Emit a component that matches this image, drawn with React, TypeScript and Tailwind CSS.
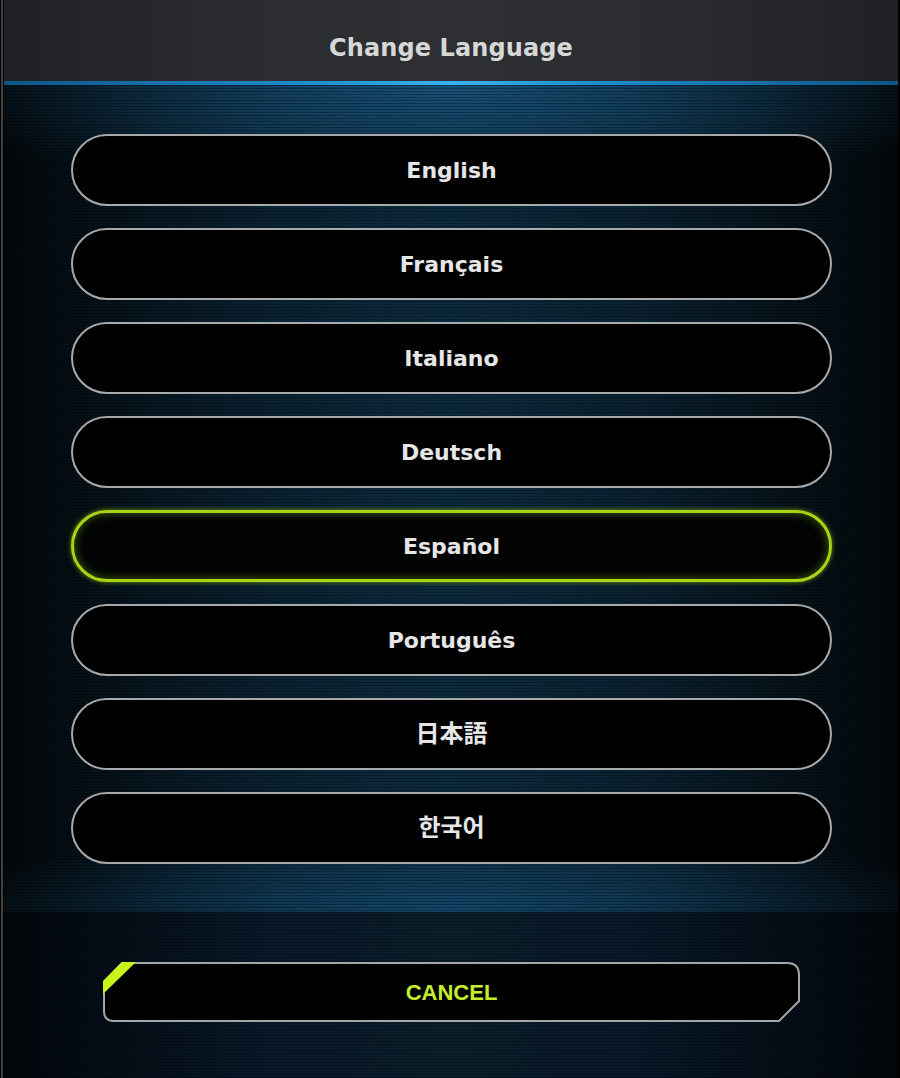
import React from "react";

const langs = ["English", "Français", "Italiano", "Deutsch", "Español", "Português", "日本語", "한국어"];

export default function App() {
  return (
    <div className="flex h-[1078px] w-[900px] bg-black">
      <div className="h-full w-[4px] border-l border-black bg-[#3e4042] border-r"></div>
      <div className="flex h-full flex-1 flex-col">
        <header className="flex h-[81px] shrink-0 items-center justify-center [background-image:linear-gradient(90deg,#1f2124,#2b2d30_30%,#2d2f32_50%,#2b2d30_70%,#1f2124)]">
          <h1
            className="mt-[14px] text-[24px] font-bold tracking-[0.1px] text-[#d6d8d8]"
            style={{ fontFamily: '"DejaVu Sans", "Liberation Sans", sans-serif' }}
          >
            Change Language
          </h1>
        </header>
        <div className="h-[4px] shrink-0 [background-image:linear-gradient(90deg,#0c5689,#1f8fd0_35%,#39b4f0_50%,#1f8fd0_65%,#0c5689)]"></div>
        <main className="flex h-[827px] shrink-0 flex-col gap-[22px] pl-[67px] pr-[66px] pt-[49px] [background-image:repeating-linear-gradient(180deg,rgba(0,0,0,0.3)_0px,rgba(0,0,0,0.3)_1px,transparent_1px,transparent_3px),radial-gradient(ellipse_60%_14%_at_50%_0%,rgba(30,110,165,0.55),transparent),radial-gradient(ellipse_60%_10%_at_50%_100%,rgba(25,95,145,0.5),transparent),linear-gradient(90deg,#03070a,#0a2232_30%,#0c2a3d_50%,#0a2232_70%,#03070a)]">
          {langs.map((l) => {
            const sel = l === "Español";
            const cjk = l === "日本語" || l === "한국어";
            return (
              <button
                key={l}
                className={
                  sel
                    ? "flex h-[72px] w-full items-center justify-center rounded-full border-[3px] border-[#a8d418] bg-[#020404] shadow-[0_0_5px_rgba(160,210,10,0.7),inset_0_0_10px_rgba(140,190,0,0.5)]"
                    : "flex h-[72px] w-full items-center justify-center rounded-full border-2 border-[#a7aaac] bg-black"
                }
              >
                <span
                  className={cjk ? "text-[24px] font-bold text-[#e6e6e6]" : "text-[22px] font-bold text-[#e6e6e6]"}
                  style={{ fontFamily: '"DejaVu Sans", "Noto Sans CJK JP", "Noto Sans CJK KR", sans-serif' }}
                >
                  {l}
                </span>
              </button>
            );
          })}
        </main>
        <footer className="flex flex-1 flex-col pl-[99px] pr-[98px] pt-[50px] [background-image:repeating-linear-gradient(180deg,rgba(0,0,0,0.25)_0px,rgba(0,0,0,0.25)_1px,transparent_1px,transparent_3px),linear-gradient(90deg,#02060a,#08192a_30%,#0a1e2b_50%,#08192a_70%,#02060a)]">
          <button className="relative flex h-[60px] w-[697px] items-center justify-center">
            <svg className="absolute inset-0" width="697" height="60" viewBox="0 0 697 60">
              <path
                d="M19 1 L684 1 Q696 1 696 13 L696 39 L676 59 L11 59 Q1 59 1 49 L1 20 Z"
                fill="#000"
                stroke="#a3a6a8"
                strokeWidth="2"
              />
              <polygon points="0,19 19,0 33,0 0,32" fill="#c8f41c" />
            </svg>
            <span
              className="relative text-[22px] font-bold text-[#c6ec2a]"
              style={{ fontFamily: '"Liberation Sans", sans-serif' }}
            >
              CANCEL
            </span>
          </button>
        </footer>
      </div>
      <div className="h-full w-[2px] bg-black"></div>
    </div>
  );
}
